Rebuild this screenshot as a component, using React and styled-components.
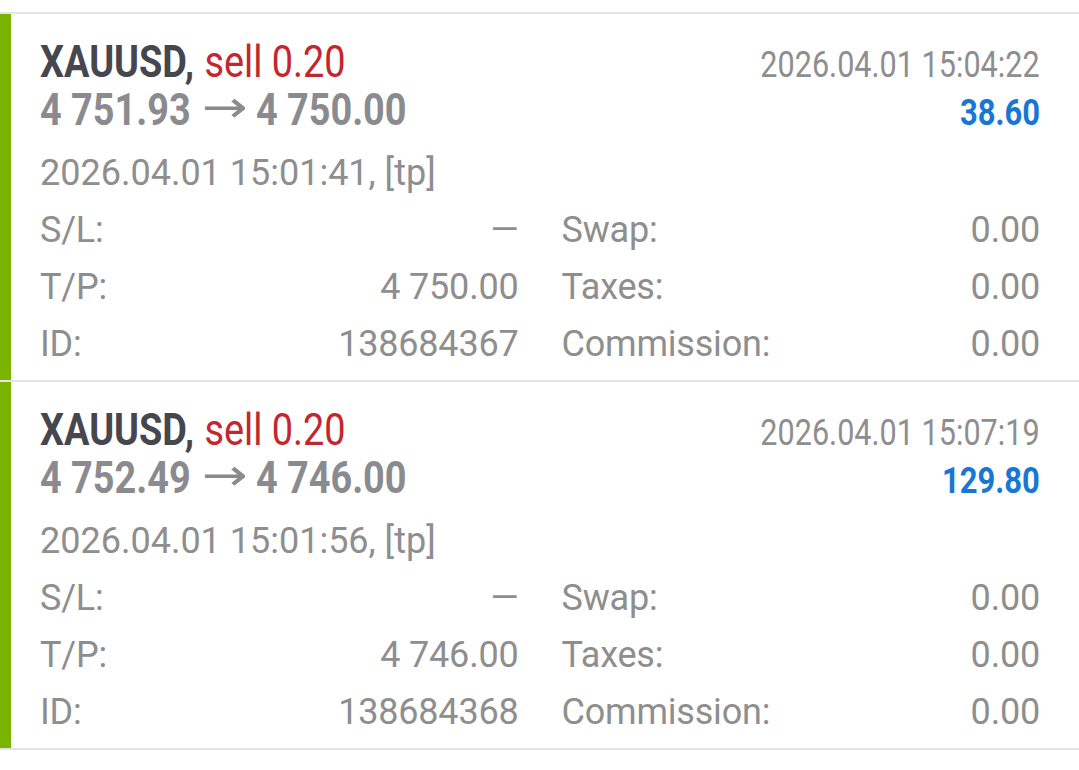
import React from 'react';
import styled, { createGlobalStyle } from 'styled-components';

const GlobalStyle = createGlobalStyle`
  html, body {
    margin: 0;
    padding: 0;
    background: #ffffff;
  }
  body {
    font-family: Roboto, "Liberation Sans", sans-serif;
  }
`;

const Page = styled.div`
  width: 1079px;
  padding-top: 12px;
  background: #fff;
`;

const List = styled.div`
  border-top: 2px solid #e4e4e4;
`;

const Item = styled.div`
  display: flex;
  border-bottom: 2px solid #e4e4e4;
`;

const Bar = styled.div`
  width: 11px;
  flex: none;
  background: #7bb400;
`;

const Content = styled.div`
  flex: 1;
  padding: 24px 39px 7px 29px;
`;

const HeadRow = styled.div`
  display: flex;
  justify-content: space-between;
  align-items: baseline;
  height: 48px;
  line-height: 48px;
`;

// header text is condensed in the app
const Condensed = styled.span`
  display: inline-block;
  white-space: nowrap;
  transform: scaleX(${p => p.$scale || 0.86});
  transform-origin: ${p => (p.$right ? 'right' : 'left')} center;
`;

const Symbol = styled.span`
  font-size: 44px;
  font-weight: 700;
  color: #46464e;
`;

const Side = styled.span`
  font-size: 44px;
  font-weight: 400;
  color: #c3262c;
  margin-left: 12px;
`;

const Price = styled.span`
  font-size: 44px;
  font-weight: 700;
  color: #8b8b8f;
`;

const Arrow = styled.span`
  display: inline-block;
  font-family: "DejaVu Sans", sans-serif;
  font-size: 44px;
  font-weight: 400;
  line-height: 0.6;
  vertical-align: 3px;
  transform: scaleX(1.45);
  margin: 0 18px 0 21px;
`;

const CloseTime = styled.span`
  font-size: 36px;
  color: #8e8e8e;
`;

const Profit = styled.span`
  font-size: 36px;
  font-weight: 700;
  color: ${p => (p.$loss ? '#c3262c' : '#1877d4')};
`;

const OpenTime = styled.div`
  margin-top: 11px;
  font-size: 36px;
  line-height: 57px;
  color: #8e8e8e;
`;

const Details = styled.div`
  display: grid;
  grid-template-columns: 1fr 1fr;
  column-gap: 43px;
`;

const Field = styled.div`
  display: flex;
  justify-content: space-between;
  font-size: 36px;
  line-height: 57px;
  letter-spacing: -0.2px;
  color: #8e8e8e;
  white-space: nowrap;
`;

const trades = [
  {
    symbol: 'XAUUSD',
    side: 'sell 0.20',
    open: '4 751.93',
    close: '4 750.00',
    closeTime: '2026.04.01 15:04:22',
    profit: '38.60',
    openTime: '2026.04.01 15:01:41',
    reason: 'tp',
    sl: '—',
    tp: '4 750.00',
    id: '138684367',
    swap: '0.00',
    taxes: '0.00',
    commission: '0.00',
  },
  {
    symbol: 'XAUUSD',
    side: 'sell 0.20',
    open: '4 752.49',
    close: '4 746.00',
    closeTime: '2026.04.01 15:07:19',
    profit: '129.80',
    openTime: '2026.04.01 15:01:56',
    reason: 'tp',
    sl: '—',
    tp: '4 746.00',
    id: '138684368',
    swap: '0.00',
    taxes: '0.00',
    commission: '0.00',
  },
];

function Trade({ t }) {
  return (
    <Item>
      <Bar />
      <Content>
        <HeadRow>
          <Condensed>
            <Symbol>{t.symbol},</Symbol>
            <Side>{t.side}</Side>
          </Condensed>
          <Condensed $right $scale={0.85}>
            <CloseTime>{t.closeTime}</CloseTime>
          </Condensed>
        </HeadRow>
        <HeadRow>
          <Condensed>
            <Price>
              {t.open}
              <Arrow>→</Arrow>
              {t.close}
            </Price>
          </Condensed>
          <Condensed $right>
            <Profit>{t.profit}</Profit>
          </Condensed>
        </HeadRow>
        <OpenTime>{t.openTime}, [{t.reason}]</OpenTime>
        <Details>
          <Field><span>S/L:</span><span>{t.sl}</span></Field>
          <Field><span>Swap:</span><span>{t.swap}</span></Field>
          <Field><span>T/P:</span><span>{t.tp}</span></Field>
          <Field><span>Taxes:</span><span>{t.taxes}</span></Field>
          <Field><span>ID:</span><span>{t.id}</span></Field>
          <Field><span>Commission:</span><span>{t.commission}</span></Field>
        </Details>
      </Content>
    </Item>
  );
}

export default function App() {
  return (
    <Page>
      <GlobalStyle />
      <List>
        {trades.map(t => (
          <Trade key={t.id} t={t} />
        ))}
      </List>
    </Page>
  );
}
